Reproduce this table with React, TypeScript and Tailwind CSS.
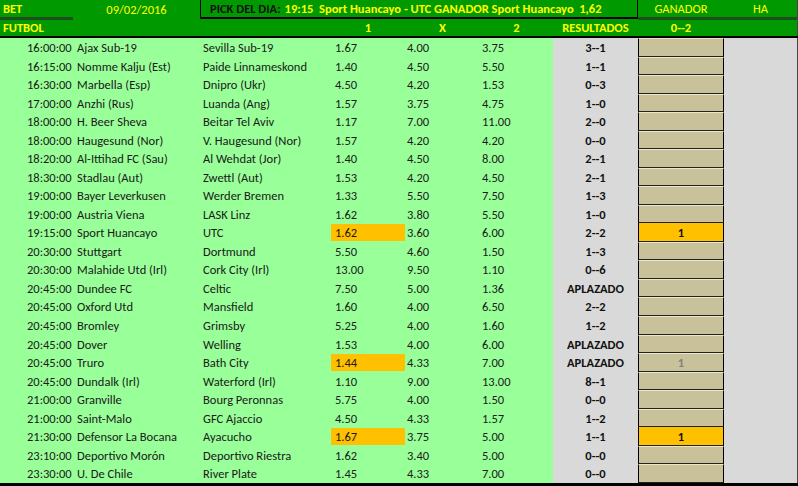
import React from "react";

type Match = {
  time: string;
  home: string;
  away: string;
  odds: [string, string, string];
  result: string;
  pick?: "win" | "off";
};

const matches: Match[] = [
  { time: "16:00:00", home: "Ajax Sub-19", away: "Sevilla Sub-19", odds: ["1.67", "4.00", "3.75"], result: "3--1" },
  { time: "16:15:00", home: "Nomme Kalju (Est)", away: "Paide Linnameskond", odds: ["1.40", "4.50", "5.50"], result: "1--1" },
  { time: "16:30:00", home: "Marbella (Esp)", away: "Dnipro (Ukr)", odds: ["4.50", "4.20", "1.53"], result: "0--3" },
  { time: "17:00:00", home: "Anzhi (Rus)", away: "Luanda (Ang)", odds: ["1.57", "3.75", "4.75"], result: "1--0" },
  { time: "18:00:00", home: "H. Beer Sheva", away: "Beitar Tel Aviv", odds: ["1.17", "7.00", "11.00"], result: "2--0" },
  { time: "18:00:00", home: "Haugesund (Nor)", away: "V. Haugesund (Nor)", odds: ["1.57", "4.20", "4.20"], result: "0--0" },
  { time: "18:20:00", home: "Al-Ittihad FC (Sau)", away: "Al Wehdat (Jor)", odds: ["1.40", "4.50", "8.00"], result: "2--1" },
  { time: "18:30:00", home: "Stadlau (Aut)", away: "Zwettl (Aut)", odds: ["1.53", "4.20", "4.50"], result: "2--1" },
  { time: "19:00:00", home: "Bayer Leverkusen", away: "Werder Bremen", odds: ["1.33", "5.50", "7.50"], result: "1--3" },
  { time: "19:00:00", home: "Austria Viena", away: "LASK Linz", odds: ["1.62", "3.80", "5.50"], result: "1--0" },
  { time: "19:15:00", home: "Sport Huancayo", away: "UTC", odds: ["1.62", "3.60", "6.00"], result: "2--2", pick: "win" },
  { time: "20:30:00", home: "Stuttgart", away: "Dortmund", odds: ["5.50", "4.60", "1.50"], result: "1--3" },
  { time: "20:30:00", home: "Malahide Utd (Irl)", away: "Cork City (Irl)", odds: ["13.00", "9.50", "1.10"], result: "0--6" },
  { time: "20:45:00", home: "Dundee FC", away: "Celtic", odds: ["7.50", "5.00", "1.36"], result: "APLAZADO" },
  { time: "20:45:00", home: "Oxford Utd", away: "Mansfield", odds: ["1.60", "4.00", "6.50"], result: "2--2" },
  { time: "20:45:00", home: "Bromley", away: "Grimsby", odds: ["5.25", "4.00", "1.60"], result: "1--2" },
  { time: "20:45:00", home: "Dover", away: "Welling", odds: ["1.53", "4.00", "6.00"], result: "APLAZADO" },
  { time: "20:45:00", home: "Truro", away: "Bath City", odds: ["1.44", "4.33", "7.00"], result: "APLAZADO", pick: "off" },
  { time: "20:45:00", home: "Dundalk (Irl)", away: "Waterford (Irl)", odds: ["1.10", "9.00", "13.00"], result: "8--1" },
  { time: "21:00:00", home: "Granville", away: "Bourg Peronnas", odds: ["5.75", "4.00", "1.50"], result: "0--0" },
  { time: "21:00:00", home: "Saint-Malo", away: "GFC Ajaccio", odds: ["4.50", "4.33", "1.57"], result: "1--2" },
  { time: "21:30:00", home: "Defensor La Bocana", away: "Ayacucho", odds: ["1.67", "3.75", "5.00"], result: "1--1", pick: "win" },
  { time: "23:10:00", home: "Deportivo Morón", away: "Deportivo Riestra", odds: ["1.62", "3.40", "5.00"], result: "0--0" },
  { time: "23:30:00", home: "U. De Chile", away: "River Plate", odds: ["1.45", "4.33", "7.00"], result: "0--0" },
];

const MatchRow = ({ m }: { m: Match }) => {
  const picked = !!m.pick;
  return (
    <div className="flex h-[18.54px] items-center leading-none">
      <div className="flex h-full w-[553px] items-center bg-[#99ff99] pt-[2px] text-[#1a1a1a]">
        <span className="w-[77px] pl-[27px]">{m.time}</span>
        <span className="w-[126px]">{m.home}</span>
        <span className="w-[128px]">{m.away}</span>
        <span
          className={
            picked
              ? "-mt-[2px] flex h-full w-[74px] items-center bg-[#ffc000] pl-[4px] pt-[2px]"
              : "w-[74px] pl-[4px]"
          }
        >
          {m.odds[0]}
        </span>
        <span className="w-[75px] pl-[2px]">{m.odds[1]}</span>
        <span className="w-[73px] pl-[2px]">{m.odds[2]}</span>
      </div>
      <div className="flex h-full w-[85px] items-center justify-center bg-[#d9d9d9] pt-[2px] font-bold text-[#111]">
        {m.result}
      </div>
      <div
        className={
          m.pick === "win"
            ? "flex h-full w-[86px] items-center justify-center border-x border-b border-x-black border-b-[#222] bg-[#ffc000] pt-[2px] font-bold text-[#111]"
            : "flex h-full w-[86px] items-center justify-center border-x border-b border-x-black border-b-[#222] border-t border-t-[#ece6c8] bg-[#c9c199] pt-[1px] font-bold text-[#7f7f7f]"
        }
      >
        {m.pick ? "1" : ""}
      </div>
      <div className="h-full w-[73px] bg-[#d9d9d9]" />
      <div className="h-full w-px bg-[#444]" />
    </div>
  );
};

export default function App() {
  return (
    <div
      className="h-[486px] w-[798px] overflow-hidden bg-black text-[12.5px]"
      style={{ fontFamily: "Carlito, Lato, 'Liberation Sans', sans-serif" }}
    >
      <div className="flex h-[20px] bg-[#009900] font-bold leading-none text-[#ffff00]">
        <div className="flex h-full w-[73px] items-center border-b-[3px] border-[#1f4f1f] pl-[3px] pt-[2px]">
          BET
        </div>
        <div className="flex h-full w-[127px] items-center justify-center pt-[1px] font-normal">
          09/02/2016
        </div>
        <div className="flex h-[19px] w-[438px] items-center border-x border-b-2 border-black pl-[9px] pt-[2px]">
          <span className="text-[#111]">PICK DEL DIA:</span>
          <span className="ml-[4px] whitespace-pre">
            19:15  Sport Huancayo - UTC GANADOR Sport Huancayo  1,62
          </span>
        </div>
        <div className="flex h-full w-[159px] border-b-[3px] border-[#1f4f1f] pt-[2px] font-normal">
          <div className="flex w-[86px] items-center justify-center">GANADOR</div>
          <div className="flex w-[73px] items-center justify-center">HA</div>
        </div>
        <div className="h-full w-px bg-[#444]" />
      </div>
      <div className="flex h-[18px] border-b-2 border-black bg-[#009900] pt-[1px] font-bold leading-none text-[#ffff00]">
        <div className="flex w-[331px] items-center pl-[3px]">FUTBOL</div>
        <div className="flex w-[74px] items-center justify-center">1</div>
        <div className="flex w-[75px] items-center justify-center">X</div>
        <div className="flex w-[73px] items-center justify-center">2</div>
        <div className="flex w-[85px] items-center justify-center">RESULTADOS</div>
        <div className="flex w-[86px] items-center justify-center">0--2</div>
        <div className="w-[73px]" />
        <div className="w-px bg-[#444]" />
      </div>
      {matches.map((m, i) => (
        <MatchRow key={i} m={m} />
      ))}
    </div>
  );
}
